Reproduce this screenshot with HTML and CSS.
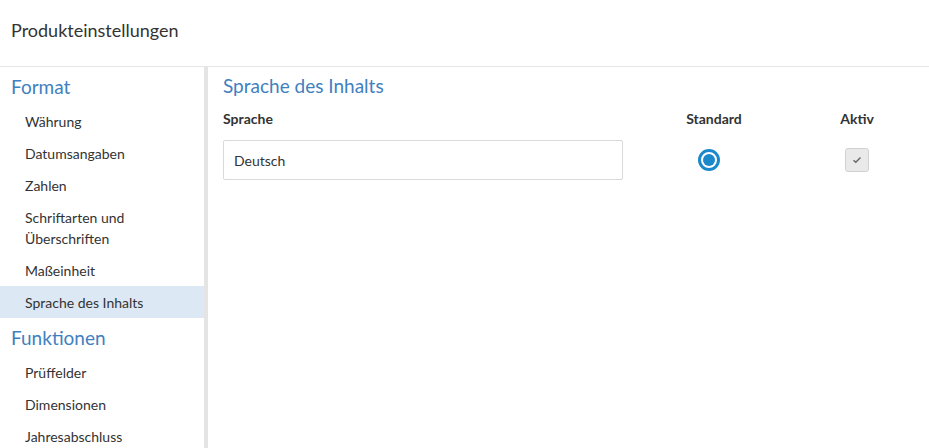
FILE: index.html
```html
<!DOCTYPE html>
<html lang="de">
<head>
<meta charset="utf-8">
<title>Produkteinstellungen</title>
<link rel="stylesheet" href="styles.css">
</head>
<body>
<header class="topbar">
  <h1 class="page-title">Produkteinstellungen</h1>
</header>
<div class="layout">
  <nav class="sidebar">
    <h2 class="nav-group">Format</h2>
    <ul class="nav-list">
      <li class="nav-item">Währung</li>
      <li class="nav-item">Datumsangaben</li>
      <li class="nav-item">Zahlen</li>
      <li class="nav-item">Schriftarten und<br>Überschriften</li>
      <li class="nav-item">Maßeinheit</li>
      <li class="nav-item active">Sprache des Inhalts</li>
    </ul>
    <h2 class="nav-group">Funktionen</h2>
    <ul class="nav-list">
      <li class="nav-item">Prüffelder</li>
      <li class="nav-item">Dimensionen</li>
      <li class="nav-item">Jahresabschluss</li>
    </ul>
  </nav>
  <main class="content">
    <h2 class="section-title">Sprache des Inhalts</h2>
    <div class="lang-grid">
      <div class="col-head">Sprache</div>
      <div class="col-head center">Standard</div>
      <div class="col-head center">Aktiv</div>
      <div class="lang-field">Deutsch</div>
      <div class="cell center"><span class="radio"><span class="radio-dot"></span></span></div>
      <div class="cell center">
        <span class="checkbox">
          <svg width="10" height="8" viewBox="0 0 10 8"><path d="M1.5 4.2 L3.8 6.3 L8.5 1.6" fill="none" stroke="#666" stroke-width="1.4"/></svg>
        </span>
      </div>
    </div>
  </main>
</div>
</body>
</html>
```

FILE: styles.css
```css
* { box-sizing: border-box; }
html, body { margin: 0; padding: 0; height: 100%; }
body {
  font-family: Lato, "Open Sans", Arial, sans-serif;
  color: #333;
  background: #fff;
  display: flex;
  flex-direction: column;
  overflow: hidden;
}
.topbar {
  height: 67px;
  flex-shrink: 0;
  border-bottom: 1px solid #e6e6e6;
  display: flex;
  align-items: center;
  padding: 0 11px 6px;
}
.page-title {
  margin: 0;
  font-size: 18px;
  font-weight: 400;
  color: #333;
}
.layout {
  flex: 1 0 auto;
  display: flex;
}
.sidebar {
  width: 208px;
  border-right: 4px solid #e4e4e4;
  flex-shrink: 0;
}
.nav-group {
  margin: 0;
  height: 38px;
  padding: 0 11px;
  display: flex;
  align-items: center;
  font-size: 19px;
  font-weight: 400;
  color: #3f80bf;
}
.nav-list {
  list-style: none;
  margin: 0;
  padding: 0;
}
.nav-item {
  font-size: 14px;
  line-height: 21px;
  padding: 5.5px 25px;
  color: #333;
}
.nav-item.active { background: #dce8f3; }
.content {
  flex: 1;
  padding: 0 15px;
}
.section-title {
  margin: 0;
  height: 36px;
  display: flex;
  align-items: center;
  font-size: 19px;
  font-weight: 400;
  color: #3f80bf;
}
.lang-grid {
  display: grid;
  grid-template-columns: 400px 182px 104px;
  grid-template-rows: 37px 40px;
  align-items: center;
}
.col-head {
  font-size: 14px;
  font-weight: 700;
  color: #333;
  padding-bottom: 6px;
}
.center { justify-self: center; }
.lang-field {
  height: 40px;
  border: 1px solid #d9d9d9;
  border-radius: 2px;
  display: flex;
  align-items: center;
  padding: 0 10px;
  font-size: 14px;
  color: #333;
}
.cell { display: flex; align-items: center; }
.radio {
  width: 22px;
  height: 22px;
  border: 3px solid #1b88cb;
  border-radius: 50%;
  display: flex;
  align-items: center;
  justify-content: center;
  margin-right: 10px;
}
.radio-dot {
  width: 12px;
  height: 12px;
  border-radius: 50%;
  background: #1b88cb;
}
.checkbox {
  width: 24px;
  height: 24px;
  border: 1px solid #d2d2d2;
  border-radius: 3px;
  background: #e9e9e9;
  display: flex;
  align-items: center;
  justify-content: center;
}
```
